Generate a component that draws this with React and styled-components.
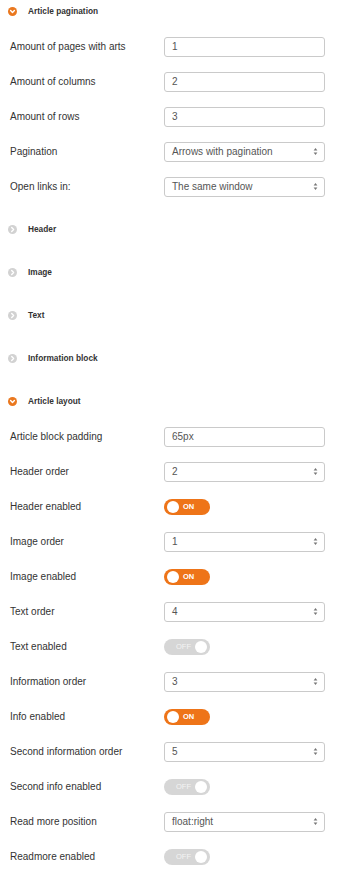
import React from "react";
import styled, { createGlobalStyle } from "styled-components";

const Global = createGlobalStyle`
  html, body { margin: 0; padding: 0; background: #fff; }
  body { font-family: "Liberation Sans", Arial, sans-serif; }
`;

const Page = styled.div`
  width: 340px;
  padding-top: 1px;
  box-sizing: border-box;
`;

const Section = styled.section`
  margin-bottom: ${(p) => (p.$open ? 15 : 23)}px;
`;

const SectionHeader = styled.div`
  display: flex;
  align-items: center;
  height: 20px;
  padding-left: 8px;
  gap: 11px;
  font-size: 8.3px;
  font-weight: bold;
  color: #333;
`;

const Body = styled.div`
  padding-top: 8px;
`;

const Row = styled.div`
  display: flex;
  align-items: center;
  height: 35px;
  padding-left: 10px;
`;

const Label = styled.div`
  width: 154px;
  font-size: 10px;
  color: #333;
`;

const Field = styled.div`
  width: 161px;
  height: 20px;
  box-sizing: border-box;
  border: 1px solid #cacaca;
  border-radius: 3px;
  display: flex;
  align-items: center;
  justify-content: space-between;
  padding: 0 6px 0 7px;
  font-size: 10px;
  color: #555;
  background: #fff;
`;

const Toggle = styled.div`
  position: relative;
  width: 46px;
  height: 16px;
  border-radius: 8px;
  background: ${(p) => (p.$on ? "#ee7418" : "#d6d6d6")};
  display: flex;
  align-items: center;
  justify-content: ${(p) => (p.$on ? "flex-start" : "flex-end")};
  box-sizing: border-box;
  padding: 0 ${(p) => (p.$on ? 0 : 19)}px 0 ${(p) => (p.$on ? 19 : 0)}px;
  font-size: 7.5px;
  font-weight: ${(p) => (p.$on ? "bold" : "normal")};
  color: ${(p) => (p.$on ? "#fff" : "#f4f4f4")};
`;

const Knob = styled.span`
  position: absolute;
  top: 2px;
  ${(p) => (p.$on ? "left: 3px;" : "right: 3px;")}
  width: 12px;
  height: 12px;
  border-radius: 50%;
  background: #fff;
`;

const Chevron = ({ open }) => (
  <svg width="9" height="9" viewBox="0 0 9 9">
    <circle cx="4.5" cy="4.5" r="4.5" fill={open ? "#ea781f" : "#d2d2d2"} />
    {open ? (
      <path d="M2.6 3.6 L4.5 5.5 L6.4 3.6" stroke="#fff" strokeWidth="1.4" fill="none" strokeLinecap="round" strokeLinejoin="round" />
    ) : (
      <path d="M3.7 2.6 L5.6 4.5 L3.7 6.4" stroke="#fff" strokeWidth="1.4" fill="none" strokeLinecap="round" strokeLinejoin="round" />
    )}
  </svg>
);

const Arrows = () => (
  <svg width="5" height="9" viewBox="0 0 5 9">
    <path d="M0.6 3.6 L2.5 0.9 L4.4 3.6 Z" fill="#777" />
    <path d="M0.6 5.4 L2.5 8.1 L4.4 5.4 Z" fill="#777" />
  </svg>
);

const Input = ({ value }) => (
  <Field>
    <span>{value}</span>
  </Field>
);

const Select = ({ value }) => (
  <Field>
    <span>{value}</span>
    <Arrows />
  </Field>
);

const Switch = ({ on }) => (
  <Toggle $on={on}>
    <Knob $on={on} />
    {on ? "ON" : "OFF"}
  </Toggle>
);

const FormRow = ({ label, children }) => (
  <Row>
    <Label>{label}</Label>
    {children}
  </Row>
);

export default function App() {
  return (
    <>
      <Global />
      <Page>
        <Section $open>
          <SectionHeader>
            <Chevron open />
            Article pagination
          </SectionHeader>
          <Body>
            <FormRow label="Amount of pages with arts"><Input value="1" /></FormRow>
            <FormRow label="Amount of columns"><Input value="2" /></FormRow>
            <FormRow label="Amount of rows"><Input value="3" /></FormRow>
            <FormRow label="Pagination"><Select value="Arrows with pagination" /></FormRow>
            <FormRow label="Open links in:"><Select value="The same window" /></FormRow>
          </Body>
        </Section>
        {["Header", "Image", "Text", "Information block"].map((t) => (
          <Section key={t}>
            <SectionHeader>
              <Chevron />
              {t}
            </SectionHeader>
          </Section>
        ))}
        <Section $open>
          <SectionHeader>
            <Chevron open />
            Article layout
          </SectionHeader>
          <Body>
            <FormRow label="Article block padding"><Input value="65px" /></FormRow>
            <FormRow label="Header order"><Select value="2" /></FormRow>
            <FormRow label="Header enabled"><Switch on /></FormRow>
            <FormRow label="Image order"><Select value="1" /></FormRow>
            <FormRow label="Image enabled"><Switch on /></FormRow>
            <FormRow label="Text order"><Select value="4" /></FormRow>
            <FormRow label="Text enabled"><Switch /></FormRow>
            <FormRow label="Information order"><Select value="3" /></FormRow>
            <FormRow label="Info enabled"><Switch on /></FormRow>
            <FormRow label="Second information order"><Select value="5" /></FormRow>
            <FormRow label="Second info enabled"><Switch /></FormRow>
            <FormRow label="Read more position"><Select value="float:right" /></FormRow>
            <FormRow label="Readmore enabled"><Switch /></FormRow>
          </Body>
        </Section>
      </Page>
    </>
  );
}
